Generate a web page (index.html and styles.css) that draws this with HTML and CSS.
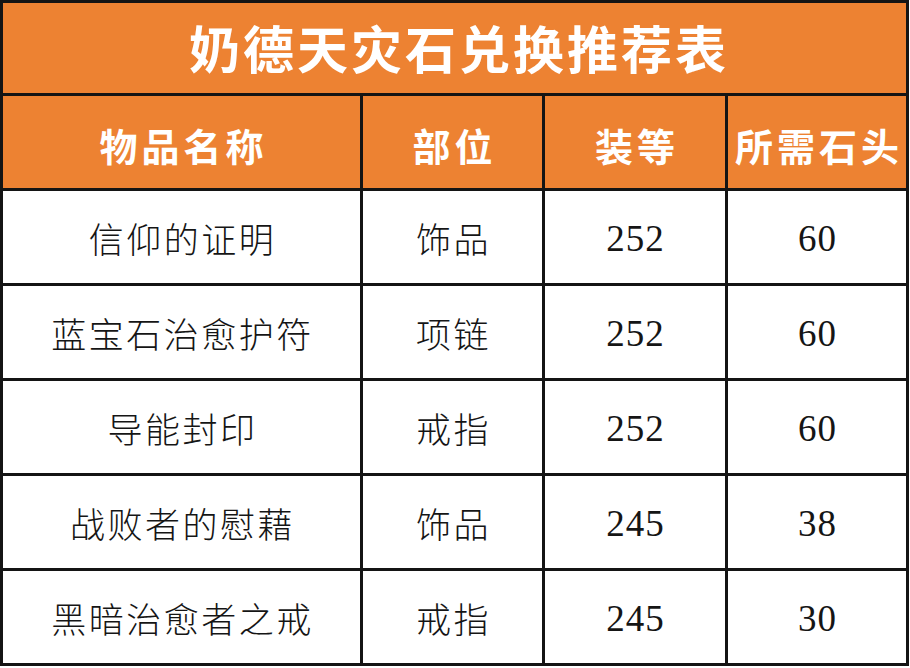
FILE: index.html
```html
<!DOCTYPE html>
<html lang="zh-CN">
<head>
<meta charset="utf-8">
<title>奶德天灾石兑换推荐表</title>
<link rel="stylesheet" href="styles.css">
</head>
<body>
<div class="sheet">
  <div class="cell title">奶德天灾石兑换推荐表</div>
  <div class="cell head">物品名称</div>
  <div class="cell head">部位</div>
  <div class="cell head">装等</div>
  <div class="cell head">所需石头</div>

  <div class="cell">信仰的证明</div>
  <div class="cell">饰品</div>
  <div class="cell num">252</div>
  <div class="cell num">60</div>

  <div class="cell">蓝宝石治愈护符</div>
  <div class="cell">项链</div>
  <div class="cell num">252</div>
  <div class="cell num">60</div>

  <div class="cell">导能封印</div>
  <div class="cell">戒指</div>
  <div class="cell num">252</div>
  <div class="cell num">60</div>

  <div class="cell">战败者的慰藉</div>
  <div class="cell">饰品</div>
  <div class="cell num">245</div>
  <div class="cell num">38</div>

  <div class="cell">黑暗治愈者之戒</div>
  <div class="cell">戒指</div>
  <div class="cell num">245</div>
  <div class="cell num">30</div>
</div>
</body>
</html>
```

FILE: styles.css
```css
html, body {
  margin: 0;
  padding: 0;
  background: #ffffff;
}

.sheet {
  width: 903px;
  padding: 3px;
  background: #141414;
  display: grid;
  grid-template-columns: 357px 179px 180px 178px;
  grid-template-rows: 90px 92px repeat(5, 92px);
  gap: 3px;
}

.cell {
  background: #ffffff;
  display: flex;
  align-items: center;
  justify-content: center;
  font-family: "Noto Sans CJK SC", "Noto Sans CJK TC", sans-serif;
  font-weight: 300;
  font-size: 35px;
  letter-spacing: 2.5px;
  padding-left: 2px;
  color: #151515;
}

.num {
  font-family: "Liberation Serif", "Noto Sans CJK SC", serif;
  font-weight: 400;
  font-size: 37px;
  letter-spacing: 1px;
  padding-left: 1px;
  padding-top: 2px;
}

.title {
  grid-column: 1 / -1;
  background: #ed8232;
  color: #ffffff;
  font-weight: 700;
  font-size: 51px;
  letter-spacing: 3px;
  padding-left: 9px;
  padding-bottom: 2px;
}

.head {
  background: #ed8232;
  color: #ffffff;
  font-weight: 700;
  font-size: 38px;
  letter-spacing: 4px;
  padding-left: 4px;
  padding-top: 4px;
}
```
